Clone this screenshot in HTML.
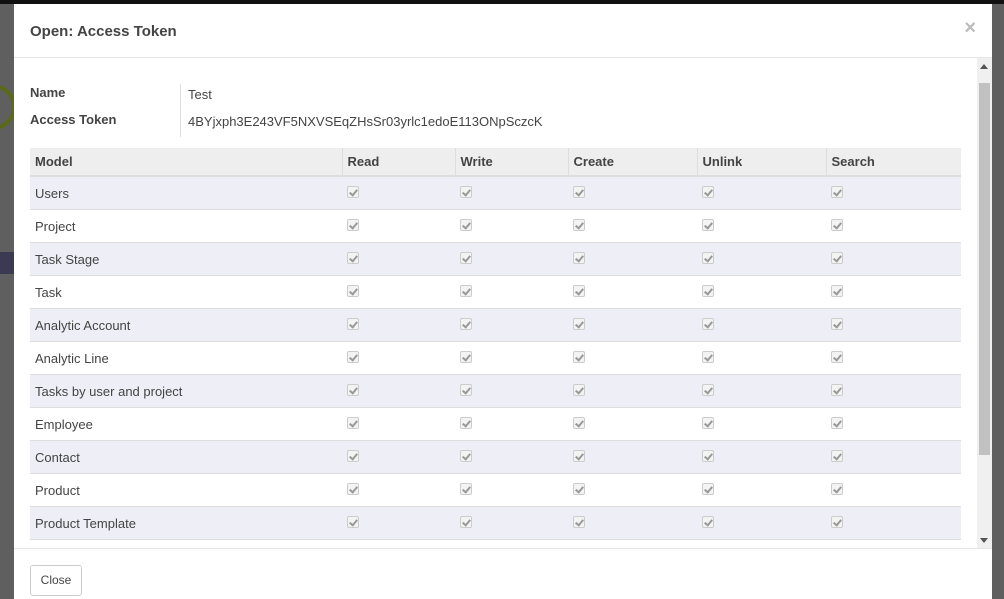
<!DOCTYPE html>
<html><head><meta charset="utf-8"><style>
*{box-sizing:border-box;margin:0;padding:0}
body{width:1004px;height:599px;overflow:hidden;background:#5f5f5f;font-family:"Liberation Sans",sans-serif;position:relative}
.topbar{position:absolute;left:0;top:0;width:1004px;height:4px;background:#111}
.bar{position:absolute;left:0;top:252px;width:14px;height:22px;background:#3a3a52}
.ring{position:absolute;left:-30px;top:84px;width:46px;height:46px;border:4px solid #5a6a1a;border-radius:50%}
.modal{position:absolute;left:14px;top:4px;width:978px;height:595px;background:#fff}
.hdr{height:54px;border-bottom:1px solid #e5e5e5;padding:19px 16px;font-weight:bold;font-size:15px;color:#444}
.x{position:absolute;right:16px;top:13px;font-size:20px;color:#bbb;font-weight:bold}
.body{position:absolute;left:0;top:54px;width:978px;height:490px;overflow:hidden}
.sb{position:absolute;right:0;top:0;width:15px;height:490px;background:#f0f0f0}
.thumb{position:absolute;right:2px;top:25px;width:11px;height:372px;background:#c1c1c1}
.lbl{position:absolute;left:16px;font-weight:bold;font-size:13px;color:#444}
.val{position:absolute;left:174px;font-size:13px;color:#444}
.sep{position:absolute;left:166px;top:26px;width:1px;height:53px;background:#ddd}
table{position:absolute;left:16px;top:90px;width:931px;border-collapse:collapse;font-size:13px;color:#444}
th{background:#eee;height:28px;text-align:left;padding-left:5px;border-bottom:2px solid #ddd;border-left:1px solid #ddd;font-weight:bold}
th:first-child{border-left:none}
td{height:33px;border-bottom:1px solid #ddd;padding-left:5px;padding-top:2px}
tr:nth-child(even) td{background:#eeeef7}
.cb{display:inline-block;width:12px;height:12px;border:1px solid #ccc;border-radius:2px;background:#f3f3f3;position:relative;top:0px;margin-left:0}
.cb:after{content:"";position:absolute;left:3px;top:1px;width:3px;height:6px;border:solid #999;border-width:0 2px 2px 0;transform:rotate(40deg)}
.ftr{position:absolute;left:0;top:544px;width:978px;border-top:1px solid #e5e5e5;height:51px}
.btn{position:absolute;left:16px;top:16px;width:52px;height:31px;border:1px solid #ccc;border-radius:3px;font-size:12px;color:#444;text-align:center;line-height:29px}
</style></head><body>
<div class="topbar"></div>
<div class="ring"></div><div class="bar"></div>
<div class="modal">
<div class="hdr">Open: Access Token</div><div class="x">×</div>
<div class="body">
<div class="lbl" style="top:27px">Name</div><div class="val" style="top:29px">Test</div>
<div class="lbl" style="top:54px">Access Token</div><div class="val" style="top:56px">4BYjxph3E243VF5NXVSEqZHsSr03yrlc1edoE113ONpSczcK</div>
<div class="sep"></div>
<table>
<tr><th style="width:312px">Model</th><th style="width:113px">Read</th><th style="width:113px">Write</th><th style="width:129px">Create</th><th style="width:129px">Unlink</th><th>Search</th></tr>
<tr><td>Users</td><td><span class="cb"></span></td><td><span class="cb"></span></td><td><span class="cb"></span></td><td><span class="cb"></span></td><td><span class="cb"></span></td></tr>
<tr><td>Project</td><td><span class="cb"></span></td><td><span class="cb"></span></td><td><span class="cb"></span></td><td><span class="cb"></span></td><td><span class="cb"></span></td></tr>
<tr><td>Task Stage</td><td><span class="cb"></span></td><td><span class="cb"></span></td><td><span class="cb"></span></td><td><span class="cb"></span></td><td><span class="cb"></span></td></tr>
<tr><td>Task</td><td><span class="cb"></span></td><td><span class="cb"></span></td><td><span class="cb"></span></td><td><span class="cb"></span></td><td><span class="cb"></span></td></tr>
<tr><td>Analytic Account</td><td><span class="cb"></span></td><td><span class="cb"></span></td><td><span class="cb"></span></td><td><span class="cb"></span></td><td><span class="cb"></span></td></tr>
<tr><td>Analytic Line</td><td><span class="cb"></span></td><td><span class="cb"></span></td><td><span class="cb"></span></td><td><span class="cb"></span></td><td><span class="cb"></span></td></tr>
<tr><td>Tasks by user and project</td><td><span class="cb"></span></td><td><span class="cb"></span></td><td><span class="cb"></span></td><td><span class="cb"></span></td><td><span class="cb"></span></td></tr>
<tr><td>Employee</td><td><span class="cb"></span></td><td><span class="cb"></span></td><td><span class="cb"></span></td><td><span class="cb"></span></td><td><span class="cb"></span></td></tr>
<tr><td>Contact</td><td><span class="cb"></span></td><td><span class="cb"></span></td><td><span class="cb"></span></td><td><span class="cb"></span></td><td><span class="cb"></span></td></tr>
<tr><td>Product</td><td><span class="cb"></span></td><td><span class="cb"></span></td><td><span class="cb"></span></td><td><span class="cb"></span></td><td><span class="cb"></span></td></tr>
<tr><td>Product Template</td><td><span class="cb"></span></td><td><span class="cb"></span></td><td><span class="cb"></span></td><td><span class="cb"></span></td><td><span class="cb"></span></td></tr>
</table>
<div class="sb"><div class="thumb"></div>
<div style="position:absolute;left:3px;top:6px;border:4px solid transparent;border-bottom:5px solid #555;border-top:0"></div>
<div style="position:absolute;left:3px;top:480px;border:4px solid transparent;border-top:5px solid #555;border-bottom:0"></div></div>
</div>
<div class="ftr"><div class="btn">Close</div></div>
</div>
</body></html>
